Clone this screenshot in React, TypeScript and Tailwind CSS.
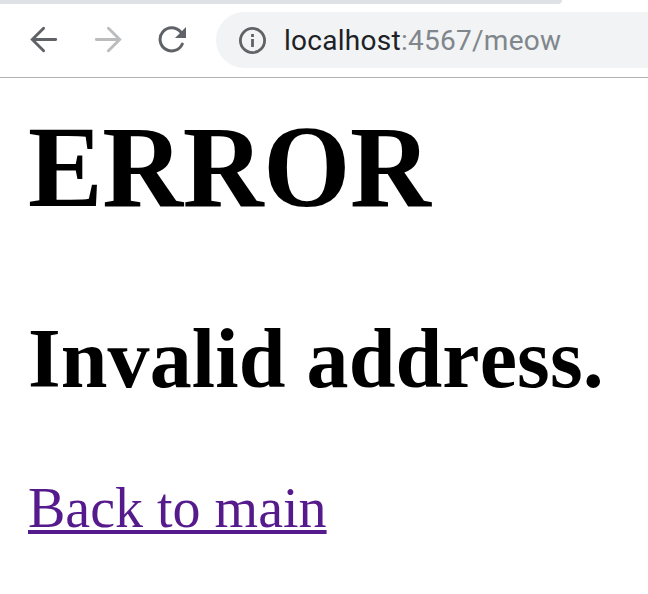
export default function App() {
  return (
    <div className="flex h-[594px] w-full flex-col overflow-hidden bg-white font-['Liberation_Serif',serif] text-black">
      <div className="h-1 w-[562px] rounded-br-[12px] bg-[#dee1e6]" />
      <header className="flex h-[74px] items-start border-b border-[#b0b1b3] pt-2">
        <svg className="ml-[30px] mt-[14px] h-7 w-7" viewBox="0 0 28 28" fill="none" stroke="#5f6368" strokeWidth="2.9" strokeLinecap="round">
          <path d="M25.7 13.5H3M13.6 2.3L2.3 13.5L13.6 24.7" />
        </svg>
        <svg className="ml-[36px] mt-[14px] h-7 w-7" viewBox="0 0 28 28" fill="none" stroke="#babcbe" strokeWidth="2.9" strokeLinecap="round">
          <path d="M2.3 13.5H25M14.4 2.3L25.7 13.5L14.4 24.7" />
        </svg>
        <svg className="ml-[36px] mt-[14px] h-7 w-7" viewBox="0 0 28 28" fill="none" stroke="#5f6368" strokeWidth="3" strokeLinecap="round">
          <path d="M22.5 5.8A11.6 11.6 0 1 0 24.3 18" />
          <path d="M28 1V12H17Z" fill="#5f6368" stroke="none" />
        </svg>
        <div className="ml-[30px] flex h-14 flex-1 items-center rounded-l-full bg-[#f1f3f4] pl-[22px]">
          <svg className="h-7 w-7" viewBox="0 0 28 28" fill="none" stroke="#5f6368" strokeWidth="2.8">
            <circle cx="14.5" cy="14.5" r="12.1" />
            <path d="M14.5 13V21M14.5 8V11" />
          </svg>
          <span className="ml-[18px] mt-[2px] whitespace-nowrap font-[Roboto,sans-serif] text-[28px] leading-8 tracking-[0.27px] text-[#80868b]"><span className="text-[#202124]">localhost</span>:4567/meow</span>
        </div>
      </header>
      <main className="flex flex-col items-start pl-7">
        <h1 className="mt-[25px] origin-[0_80%] scale-y-[1.035] text-[112px] font-bold leading-[130px] tracking-[-0.4px]">ERROR</h1>
        <h2 className="mt-[76px] text-[84px] font-bold leading-[100px] tracking-[0.1px] [font-kerning:none]">Invalid address.</h2>
        <a href="#" className="mt-[67px] text-[56px] leading-[64px] text-[#551a8b] underline decoration-[4px] underline-offset-[3px] [text-decoration-skip-ink:none]">Back to main</a>
      </main>
    </div>
  );
}
